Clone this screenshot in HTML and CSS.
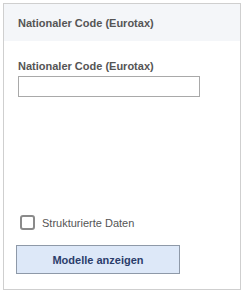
FILE: index.html
```html
<!DOCTYPE html>
<html lang="de">

<head>
  <meta charset="UTF-8">
  <meta name="viewport" content="width=device-width, initial-scale=1.0">
  <title>Eurotax</title>
  <link rel="stylesheet" href="styles.css">
</head>

<body>
  <div class="panel">
    <div class="panel-header">
      <h2>Nationaler Code (Eurotax)</h2>
    </div>

    <div class="panel-body">
      <div class="field">
        <label for="code">Nationaler Code (Eurotax)</label>
        <input type="text" id="code">
      </div>

      <label class="check">
        <span class="box"></span>
        Strukturierte Daten
      </label>

      <button class="btn">Modelle anzeigen</button>
    </div>
  </div>
</body>

</html>
```
FILE: styles.css
```css
* {
  margin: 0;
  padding: 0;
  box-sizing: border-box;
  font-family: "Liberation Sans", Arial, sans-serif;
}

body {
  background: #ffffff;
}

/* Panel */
.panel {
  margin: 3px;
  width: 238px;
  height: 287px;
  border: 1px solid #cfcfcf;
  display: flex;
  flex-direction: column;
}

.panel-header {
  height: 37px;
  background: #f4f6f9;
  padding-left: 14px;
  display: flex;
  align-items: center;
}

.panel-header h2 {
  font-size: 11px;
  font-weight: bold;
  color: #555555;
}

.panel-body {
  flex: 1;
  display: flex;
  flex-direction: column;
  padding: 18px 14px 15px 12px;
}

/* Field */
.field {
  padding-left: 2px;
}

.field label {
  display: block;
  font-size: 11px;
  font-weight: bold;
  color: #555555;
  line-height: 14px;
  margin-bottom: 3px;
}

.field input {
  width: 182px;
  height: 21px;
  border: 1px solid #a9a9a9;
  background: #ffffff;
}

/* Checkbox */
.check {
  margin-top: auto;
  margin-left: 4px;
  display: flex;
  align-items: center;
  font-size: 11px;
  color: #555555;
  margin-bottom: 15px;
}

.check .box {
  width: 15px;
  height: 15px;
  border: 2px solid #8a8a8a;
  border-radius: 3px;
  margin-right: 7px;
}

/* Button */
.btn {
  width: 164px;
  height: 29px;
  background: #dde8f8;
  border: 1px solid #8e99a8;
  color: #2b3d6b;
  font-size: 11px;
  font-weight: bold;
  cursor: pointer;
}
```
